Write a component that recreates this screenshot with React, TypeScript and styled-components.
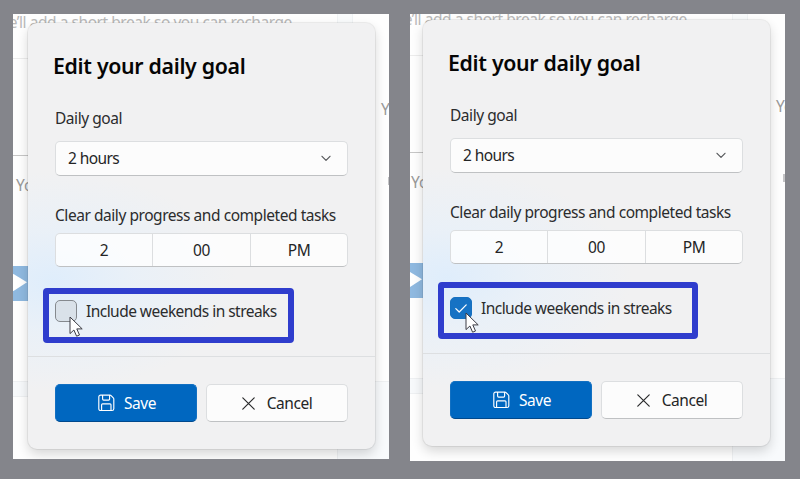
import React from "react";
import styled, { createGlobalStyle, css } from "styled-components";

const GlobalStyle = createGlobalStyle`
  * { box-sizing: border-box; }
  body {
    margin: 0;
    background: #84858b;
    font-family: "Noto Sans", "Open Sans", sans-serif;
    overflow: hidden;
  }
`;

const Page = styled.main`
  display: flex;
  align-items: flex-start;
  gap: 21px;
  width: 800px;
  height: 479px;
  padding: 14px 0 0 13px;
  background: #84858b;
`;

const Pane = styled.section<{ $width: number; $height: number; $x: number; $y: number }>`
  position: relative;
  flex: none;
  overflow: hidden;
  width: ${(p) => p.$width}px;
  height: ${(p) => p.$height}px;
  padding: ${(p) => p.$y}px 0 0 ${(p) => p.$x}px;
  background: #fefefe;
`;

/* Dimmed window behind the dialog; it shares the dialog's origin. */
const Behind = styled.div<{ $x: number; $y: number }>`
  position: absolute;
  left: ${(p) => p.$x}px;
  top: ${(p) => p.$y}px;
  width: 0;
  height: 0;
`;

const FadedText = styled.span<{ $x: number; $y: number; $color: string; $track?: number }>`
  position: absolute;
  left: ${(p) => p.$x}px;
  top: ${(p) => p.$y}px;
  font-size: 15.5px;
  line-height: 22px;
  letter-spacing: ${(p) => p.$track ?? 0}px;
  white-space: nowrap;
  color: ${(p) => p.$color};
`;

const Surface = styled.div<{ $x: number; $y: number; $w: number; $h: number; $fill: string; $edge?: string }>`
  position: absolute;
  left: ${(p) => p.$x}px;
  top: ${(p) => p.$y}px;
  width: ${(p) => p.$w}px;
  height: ${(p) => p.$h}px;
  background: ${(p) => p.$fill};
  ${(p) => p.$edge && css`border: 1px solid ${p.$edge};`}
`;

const PlayGlyph = styled.svg`
  position: absolute;
  left: -16px;
  top: 250px;
`;

const Dialog = styled.div`
  position: relative;
  width: 347px;
  height: 426px;
  border-radius: 9px;
  background:
    radial-gradient(ellipse 185px 110px at 24px 258px, rgba(222, 237, 252, 0.95), rgba(229, 240, 251, 0.6) 45%, rgba(241, 242, 242, 0) 100%),
    #f1f1f2;
  box-shadow: 0 0 0 1px rgba(0, 0, 0, 0.06), 0 5px 12px rgba(0, 0, 0, 0.16);
`;

const Body = styled.div`
  display: flex;
  flex-direction: column;
  height: 334px;
  padding: 28px 27px 0;
  border-bottom: 1px solid #dddfe1;
`;

const Title = styled.h1`
  margin: 0 0 26px -2px;
  font-size: 21.3px;
  line-height: 30px;
  font-weight: 600;
  letter-spacing: -0.31px;
  color: #050505;
  white-space: nowrap;
`;

const Label = styled.div<{ $gap: number }>`
  height: 22px;
  margin-bottom: ${(p) => p.$gap}px;
  font-size: 15.5px;
  line-height: 22px;
  letter-spacing: -0.45px;
  white-space: nowrap;
  color: #2b2c2d;
`;

const field = css`
  border: 1px solid #dcdee0;
  border-bottom-color: #bfc1c3;
  border-radius: 5px;
  background: rgba(255, 255, 255, 0.78);
  color: #242526;
  font-size: 15.5px;
`;

const Select = styled.div`
  ${field}
  display: flex;
  align-items: center;
  justify-content: space-between;
  height: 35px;
  margin-bottom: 28px;
  padding: 0 16px 0 12px;
  line-height: 22px;
  letter-spacing: -0.6px;
`;

const SelectValue = styled.span`
  padding-bottom: 1px;
`;

const TimePicker = styled.div`
  ${field}
  display: grid;
  grid-template-columns: 96px 98px 1fr;
  height: 34px;
`;

const TimeCell = styled.div`
  text-align: center;
  line-height: 32px;
  letter-spacing: -0.4px;
  & + & { border-left: 1px solid #dcdee0; }
`;

const CheckRow = styled.label`
  position: relative;
  display: flex;
  align-items: center;
  gap: 9px;
  height: 22px;
  margin-top: 33px;
  font-size: 15.5px;
  white-space: nowrap;
  color: #2b2c2d;
`;

const CheckText = styled.span`
  line-height: 22px;
  letter-spacing: -0.54px;
`;

const CheckBox = styled.span<{ $on: boolean }>`
  display: flex;
  align-items: center;
  justify-content: center;
  width: 22px;
  height: 22px;
  border-radius: 5px;
  border: 1px solid ${(p) => (p.$on ? "#1670c0" : "#85898e")};
  background: ${(p) => (p.$on ? "#1672c4" : "#d9e1e9")};
`;

/* Marker frame drawn over the dialog around the option. */
const Highlight = styled.div<{ $w: number; $h: number; $y: number }>`
  position: absolute;
  left: -12px;
  top: ${(p) => p.$y}px;
  width: ${(p) => p.$w}px;
  height: ${(p) => p.$h}px;
  border: 6px solid #2f3dcd;
  border-radius: 4px;
`;

const Pointer = styled.svg<{ $x: number; $y: number }>`
  position: absolute;
  left: ${(p) => p.$x}px;
  top: ${(p) => p.$y}px;
`;

const Footer = styled.div`
  display: grid;
  grid-template-columns: 142px 142px;
  gap: 9px;
  padding: 27px 27px 0;
`;

const Button = styled.button<{ $primary?: boolean }>`
  ${field}
  display: flex;
  align-items: center;
  justify-content: center;
  height: 38px;
  padding: 0;
  font-family: inherit;
  gap: ${(p) => (p.$primary ? 9 : 12)}px;
  letter-spacing: -0.45px;
  ${(p) =>
    p.$primary &&
    css`
      padding-left: 2px;
      letter-spacing: -0.4px;
      color: #fff;
      background: #0067c0;
      border-color: #1270c2;
      border-bottom-color: #00498d;
    `}
`;

const Chevron = () => (
  <svg width="10" height="7" viewBox="0 0 10 7" fill="none" stroke="#55575a" strokeWidth="1.2" strokeLinecap="round" strokeLinejoin="round">
    <path d="M1 1.3 5 5.4 9 1.3" />
  </svg>
);

const SaveIcon = () => (
  <svg width="17" height="18" viewBox="0 0 17 18" fill="none" stroke="#fff" strokeWidth="1.15" strokeLinejoin="round">
    <path d="M2.6 1.1h9.3c.5 0 .9.2 1.2.5l2.2 2.2c.3.3.5.7.5 1.1v9.8c0 1-.8 1.8-1.8 1.8H2.6c-1 0-1.8-.8-1.8-1.8V2.9c0-1 .8-1.8 1.8-1.8Z" />
    <path d="M4.6 1.1v4c0 .6.4 1 1 1h5c.6 0 1-.4 1-1v-4" />
    <path d="M3.6 16.4v-5.6c0-.6.4-1 1-1H12c.6 0 1 .4 1 1v5.6" />
  </svg>
);

const CloseIcon = () => (
  <svg width="13" height="13" viewBox="0 0 13 13" fill="none" stroke="#2a2b2c" strokeWidth="1.2" strokeLinecap="round">
    <path d="M.8.8 12.2 12.2M12.2.8.8 12.2" />
  </svg>
);

const CheckMark = () => (
  <svg width="12" height="9" viewBox="0 0 12 9" fill="none" stroke="#fff" strokeWidth="1.25" strokeLinecap="round" strokeLinejoin="round">
    <path d="M.8 4.6 4.2 8 11.2.9" />
  </svg>
);

type PanelProps = {
  width: number;
  height: number;
  x: number;
  y: number;
  checked: boolean;
  frame: { w: number; h: number; y: number };
  pointer: { x: number; y: number };
};

function GoalPanel({ width, height, x, y, checked, frame, pointer }: PanelProps) {
  return (
    <Pane $width={width} $height={height} $x={x} $y={y}>
      <Behind $x={x} $y={y}>
        <Surface $x={-16} $y={35} $w={18} $h={1} $fill="#ececec" />
        <Surface $x={309} $y={-12} $w={16} $h={30} $fill="#f9fbfc" $edge="#f0f3f5" />
        <Surface $x={-16} $y={132} $w={18} $h={1} $fill="#c6c6c6" />
        <Surface $x={-16} $y={358} $w={18} $h={16} $fill="#f7f9fb" $edge="#eef0f2" />
        <Surface $x={309} $y={358} $w={70} $h={90} $fill="#f8fafc" $edge="#eef0f2" />
        <Surface $x={-16} $y={243} $w={18} $h={35} $fill="#8fb9e0" />
        <PlayGlyph width="16" height="20" viewBox="0 0 16 20">
          <path d="M0 1.5 1.5 1 15 9.2 1.5 18 0 18Z" fill="#fff" />
        </PlayGlyph>
        <FadedText $x={-33} $y={-12} $color="#b9b9b9" $track={-0.45}>We’ll add a short break so you can recharge.</FadedText>
        <FadedText $x={-12} $y={151} $color="#999">You</FadedText>
        <FadedText $x={353} $y={75} $color="#999">You</FadedText>
        <Surface $x={360} $y={154} $w={4} $h={8} $fill="#c4c4c6" />
      </Behind>
      <Dialog>
        <Body>
          <Title>Edit your daily goal</Title>
          <Label $gap={12}>Daily goal</Label>
          <Select>
            <SelectValue>2 hours</SelectValue>
            <Chevron />
          </Select>
          <Label $gap={7}>Clear daily progress and completed tasks</Label>
          <TimePicker>
            <TimeCell>2</TimeCell>
            <TimeCell>00</TimeCell>
            <TimeCell>PM</TimeCell>
          </TimePicker>
          <CheckRow>
            <CheckBox $on={checked}>{checked && <CheckMark />}</CheckBox>
            <CheckText>Include weekends in streaks</CheckText>
            <Highlight $w={frame.w} $h={frame.h} $y={frame.y} />
            <Pointer $x={pointer.x} $y={pointer.y} width="15" height="22" viewBox="0 0 15 22">
              <path d="M1 1v16.6l3.9-3.6 2.7 6.2 2.9-1.2-2.7-6.1h5.4Z" fill="#fff" stroke="#3c3c44" strokeWidth="1" strokeLinejoin="round" />
            </Pointer>
          </CheckRow>
        </Body>
        <Footer>
          <Button $primary>
            <SaveIcon />
            Save
          </Button>
          <Button>
            <CloseIcon />
            Cancel
          </Button>
        </Footer>
      </Dialog>
    </Pane>
  );
}

export default function App() {
  return (
    <>
      <GlobalStyle />
      <Page>
        <GoalPanel width={376} height={445} x={15} y={9} checked={false} frame={{ w: 251, h: 55, y: -12 }} pointer={{ x: 14, y: 16 }} />
        <GoalPanel width={375} height={447} x={13} y={6} checked frame={{ w: 260, h: 57, y: -15 }} pointer={{ x: 15, y: 15 }} />
      </Page>
    </>
  );
}
